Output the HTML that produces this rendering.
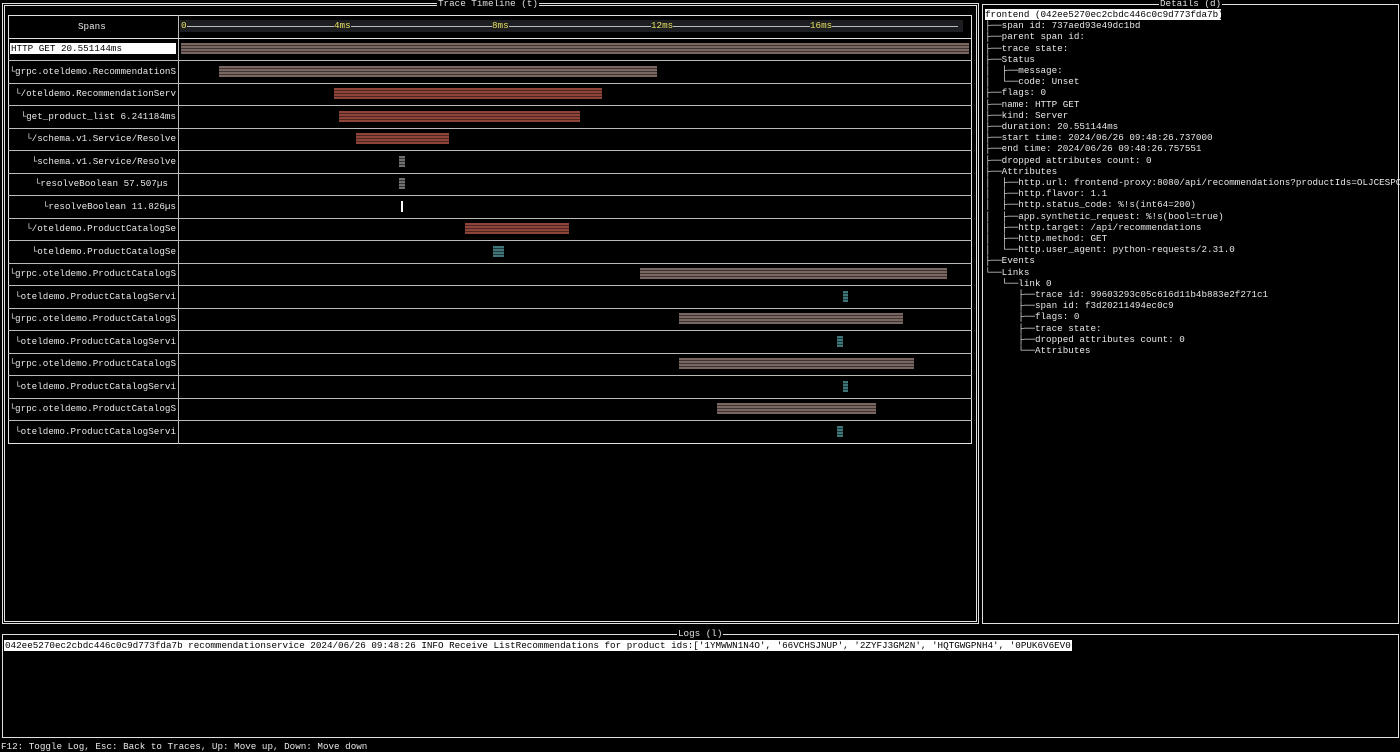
<!DOCTYPE html>
<html><head><meta charset="utf-8"><style>
*{margin:0;padding:0;box-sizing:border-box}
body{width:1400px;height:752px;background:#000;color:#e8e8e8;font-family:"Liberation Mono","DejaVu Sans Mono",monospace;font-size:9.25px;line-height:11.2px;position:relative;overflow:hidden}
.abs{position:absolute}
.dbl{border:3px double #e0e0e0}
.sgl{border:1px solid #e0e0e0}
.title{position:absolute;background:#000;padding:0 1px;color:#e0e0e0;white-space:pre}
pre{font-family:inherit;font-size:inherit;line-height:inherit;white-space:pre}
.row{position:absolute;left:8px;width:964px;height:23px;border-bottom:1px solid #bbb}
.lbl{position:absolute;right:796px;top:5px;white-space:pre;text-align:right}
.bar{position:absolute;top:5px;height:11px}
.b1{background:repeating-linear-gradient(0deg,#7a6660 0 2px,#3e3431 2px 3px)}
.b2{background:repeating-linear-gradient(0deg,#8e4438 0 2px,#4e2621 2px 3px)}
.b3{background:repeating-linear-gradient(0deg,#707070 0 2px,#333 2px 3px)}
.b4{background:repeating-linear-gradient(0deg,#3f7478 0 2px,#203a3c 2px 3px)}
.tick{position:absolute;top:20px;color:#e8e060;background:#1c1e22}
</style></head><body>
<div class="abs dbl" style="left:2px;top:3px;width:977px;height:621px"></div>
<div class="title" style="left:437px;top:-2px">Trace Timeline (t)</div>
<div class="abs sgl" style="left:8px;top:15px;width:964px;height:429px"></div>
<div class="abs" style="left:178px;top:15px;width:1px;height:429px;background:#bbb"></div>
<div class="abs" style="left:8px;top:38px;width:964px;height:1px;background:#ddd"></div>
<div class="abs" style="left:78px;top:21px">Spans</div>
<div class="abs" style="left:180px;top:20px;width:783px;height:12px;background:#1c1e22"></div>
<div class="abs" style="left:186px;top:26px;width:772px;height:1px;background:#bbb"></div>
<div class="tick" style="left:181px">0</div>
<div class="tick" style="left:334px">4ms</div>
<div class="tick" style="left:492px">8ms</div>
<div class="tick" style="left:651px">12ms</div>
<div class="tick" style="left:810px">16ms</div>

<div class="row" style="top:38px"><div class="abs" style="left:2px;top:5px;width:166px;height:11px;background:#fff;color:#000;padding-left:1px">HTTP GET 20.551144ms</div><div class="bar b1" style="left:173px;width:788px"></div></div>
<div class="row" style="top:61px"><div class="lbl">└grpc.oteldemo.RecommendationS</div><div class="bar b1" style="left:211px;width:438px"></div></div>
<div class="row" style="top:83px"><div class="lbl">└/oteldemo.RecommendationServ</div><div class="bar b2" style="left:326px;width:268px"></div></div>
<div class="row" style="top:106px"><div class="lbl">└get_product_list 6.241184ms</div><div class="bar b2" style="left:331px;width:241px"></div></div>
<div class="row" style="top:128px"><div class="lbl">└/schema.v1.Service/Resolve</div><div class="bar b2" style="left:348px;width:93px"></div></div>
<div class="row" style="top:151px"><div class="lbl">└schema.v1.Service/Resolve</div><div class="bar b3" style="left:391px;width:6px"></div></div>
<div class="row" style="top:173px"><div class="lbl" style="right:804px">└resolveBoolean 57.507µs</div><div class="bar b3" style="left:391px;width:6px"></div></div>
<div class="row" style="top:196px"><div class="lbl">└resolveBoolean 11.826µs</div><div class="bar" style="left:393px;width:2px;background:#fff"></div></div>
<div class="row" style="top:218px"><div class="lbl">└/oteldemo.ProductCatalogSe</div><div class="bar b2" style="left:457px;width:104px"></div></div>
<div class="row" style="top:241px"><div class="lbl">└oteldemo.ProductCatalogSe</div><div class="bar b4" style="left:485px;width:11px"></div></div>
<div class="row" style="top:263px"><div class="lbl">└grpc.oteldemo.ProductCatalogS</div><div class="bar b1" style="left:632px;width:307px"></div></div>
<div class="row" style="top:286px"><div class="lbl">└oteldemo.ProductCatalogServi</div><div class="bar b4" style="left:835px;width:5px"></div></div>
<div class="row" style="top:308px"><div class="lbl">└grpc.oteldemo.ProductCatalogS</div><div class="bar b1" style="left:671px;width:224px"></div></div>
<div class="row" style="top:331px"><div class="lbl">└oteldemo.ProductCatalogServi</div><div class="bar b4" style="left:829px;width:6px"></div></div>
<div class="row" style="top:353px"><div class="lbl">└grpc.oteldemo.ProductCatalogS</div><div class="bar b1" style="left:671px;width:235px"></div></div>
<div class="row" style="top:376px"><div class="lbl">└oteldemo.ProductCatalogServi</div><div class="bar b4" style="left:835px;width:5px"></div></div>
<div class="row" style="top:398px"><div class="lbl">└grpc.oteldemo.ProductCatalogS</div><div class="bar b1" style="left:709px;width:159px"></div></div>
<div class="row" style="top:421px;border-bottom:none"><div class="lbl">└oteldemo.ProductCatalogServi</div><div class="bar b4" style="left:829px;width:6px"></div></div>

<div class="abs sgl" style="left:982px;top:4px;width:417px;height:620px"></div>
<div class="title" style="left:1159px;top:-2px">Details (d)</div>
<div class="abs" style="left:985px;top:9px;width:236px;height:11px;background:#fff"></div>
<pre class="abs" style="left:985px;top:9px"><span style="color:#000">frontend (042ee5270ec2cbdc446c0c9d773fda7b)</span>
├──span id: 737aed93e49dc1bd
├──parent span id:
├──trace state:
├──Status
│  ├──message:
│  └──code: Unset
├──flags: 0
├──name: HTTP GET
├──kind: Server
├──duration: 20.551144ms
├──start time: 2024/06/26 09:48:26.737000
├──end time: 2024/06/26 09:48:26.757551
├──dropped attributes count: 0
├──Attributes
│  ├──http.url: frontend-proxy:8080/api/recommendations?productIds=OLJCESPC
│  ├──http.flavor: 1.1
│  ├──http.status_code: %!s(int64=200)
│  ├──app.synthetic_request: %!s(bool=true)
│  ├──http.target: /api/recommendations
│  ├──http.method: GET
│  └──http.user_agent: python-requests/2.31.0
├──Events
└──Links
   └──link 0
      ├──trace id: 99603293c05c616d11b4b883e2f271c1
      ├──span id: f3d20211494ec0c9
      ├──flags: 0
      ├──trace state:
      ├──dropped attributes count: 0
      └──Attributes</pre>

<div class="abs sgl" style="left:2px;top:634px;width:1397px;height:104px"></div>
<div class="title" style="left:677px;top:628px">Logs (l)</div>
<div class="abs" style="left:4px;top:640px;width:1068px;height:11px;background:#fff"></div>
<pre class="abs" style="left:5px;top:640px;color:#000">042ee5270ec2cbdc446c0c9d773fda7b recommendationservice 2024/06/26 09:48:26 INFO Receive ListRecommendations for product ids:['1YMWWN1N4O', '66VCHSJNUP', '2ZYFJ3GM2N', 'HQTGWGPNH4', '0PUK6V6EV0']</pre>
<pre class="abs" style="left:1px;top:741px">F12: Toggle Log, Esc: Back to Traces, Up: Move up, Down: Move down</pre>
</body></html>
